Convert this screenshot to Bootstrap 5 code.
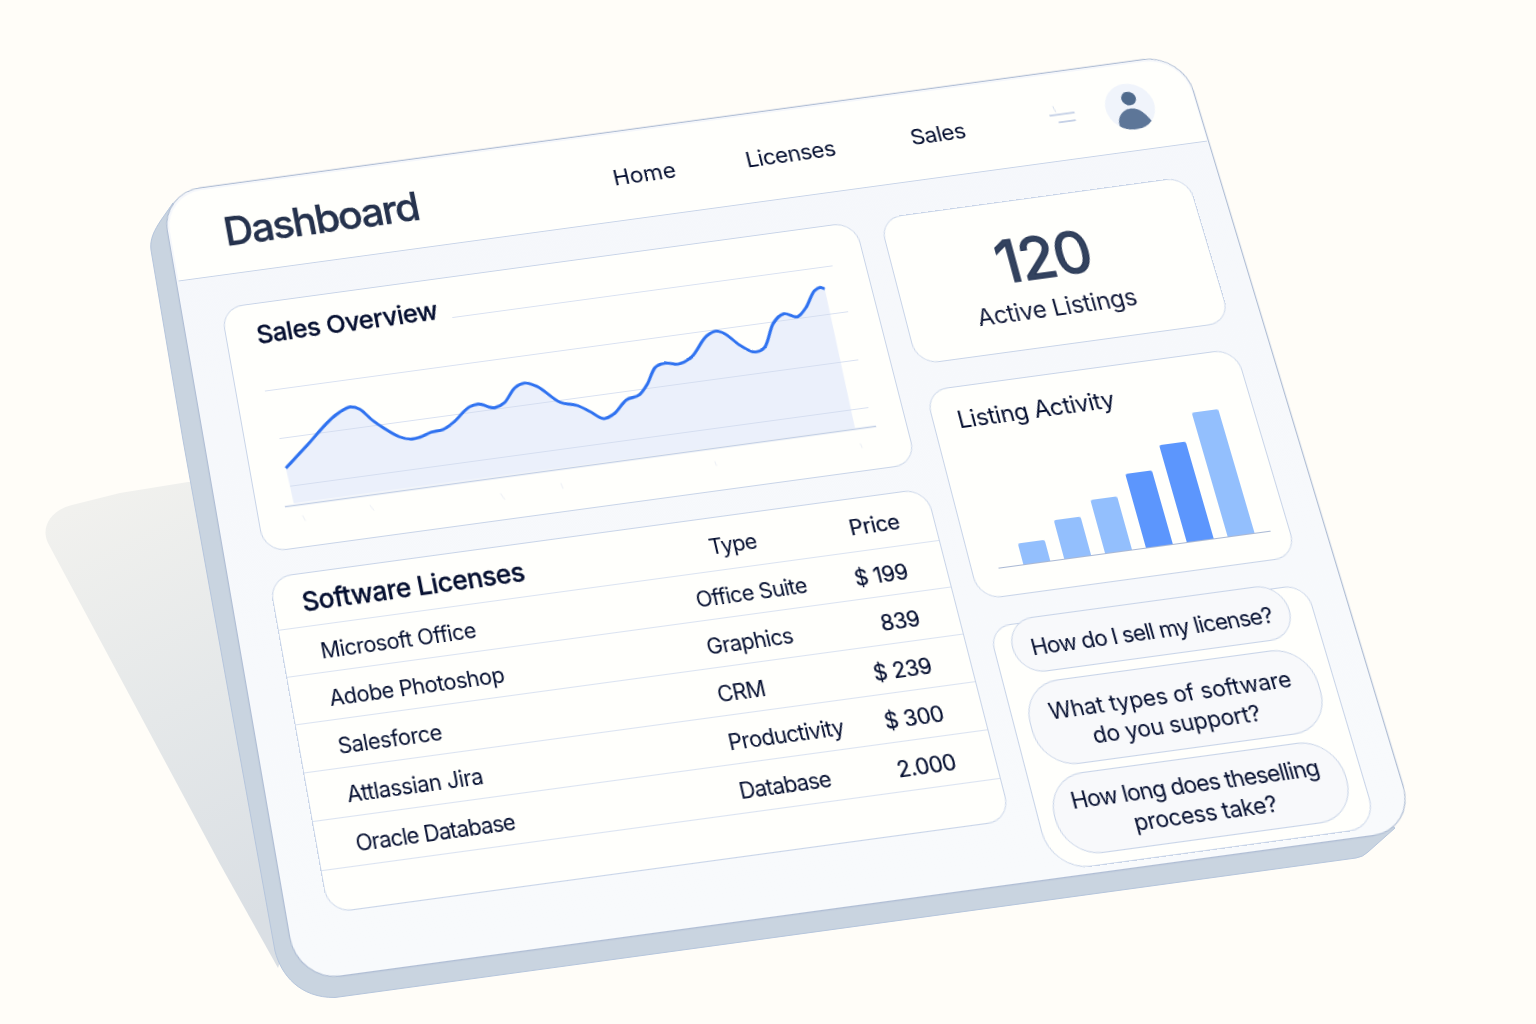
<!DOCTYPE html>
<html lang="en">
<head>
<meta charset="utf-8">
<meta name="viewport" content="width=device-width, initial-scale=1">
<title>Dashboard</title>
<link href="https://cdn.jsdelivr.net/npm/bootstrap@5.3.0/dist/css/bootstrap.min.css" rel="stylesheet">
<style>
  :root { --ink: #050f30; --line: #c8d4e8; --paper: #fffffc; }
  body { background: #fffdf8; font-family: Inter, "Open Sans", sans-serif; color: var(--ink); }
  .scene { width: 1536px; height: 1024px; background: #fffdf8; }
  .backdrop { width: 1536px; height: 1024px; }

  /* The tilted board: everything inside is laid out flat, then projected. */
  .board {
    width: 1083px; height: 801px; top: 0; left: 0;
    transform-origin: 0 0;
    transform: matrix3d(.9422, -.1282, 0, 0, .1380, .8767, 0, -.0001085, 0, 0, 1, 0, 161.5, 193.7, 0, 1);
    background: linear-gradient(180deg, #f5f7fb, #f8fafc);
    border-radius: 41px; padding: 1.5px;
    box-shadow: 0 0 0 1.2px #afbdd4, 0 0 0 5px rgba(255, 255, 255, .005);
  }
  .topbar { height: 95px; background: var(--paper); border-bottom: 1.6px solid var(--line); padding-left: 56px; border-radius: 40px 40px 0 0; }
  .brand { width: 411px; font-size: 42.5px; font-weight: 500; line-height: 1; color: #25324d; letter-spacing: -1.9px; padding-top: 6px; -webkit-text-stroke: .3px #14203c; }
  .topbar .nav-link { font-size: 23.5px; line-height: 1; padding: 3px 0 0; color: var(--ink); letter-spacing: -.55px; }
  .topbar .nl-home { width: 140px; letter-spacing: 0; } .nl-lic { width: 174px; } .nl-sales { width: 147px; }
  .burger { width: 58px; padding-bottom: 4px; }

  .panel { background: var(--paper); border: 1.6px solid var(--line); border-radius: 23px; }
  .area { padding: 34.5px 0 0 38.5px; gap: 22px; }
  .col-main { width: 667px; gap: 25.5px; }
  .col-side { width: 322px; }
  .sales { height: 257.5px; width: 664px; }
  .sec-title { font-size: 26.3px; font-weight: 500; line-height: 1; margin: 0; color: var(--ink); -webkit-text-stroke: .3px var(--ink); letter-spacing: -.45px; }
  .sales .sec-title { height: 51px; padding: 20px 0 0 31px; }
  .sales svg { margin-left: 2px; }

  .licenses { height: 329px; }
  .lic-row { height: 47px; border-bottom: 1.3px solid #dbe3f1; font-size: 21.5px; line-height: 1; letter-spacing: -.5px; padding: 6px 38px 0 37.5px; }
  .lic-head { height: 53px; padding: 5px 34px 0 28px; }
  .lic-head .c-name { width: 411px; padding-top: 0; }
  .c-name { width: 377px; }
  .c-type { flex: 1; letter-spacing: -.65px; }
  .c-price { -webkit-text-stroke: .2px var(--ink); letter-spacing: -.4px; }
  .c-tight { letter-spacing: -.85px; }

  .stat { height: 158px; width: 323px; padding-right: 14px; }
  .stat-num { font-size: 62px; font-weight: 400; line-height: 1; color: #33435f; letter-spacing: -1.7px; -webkit-text-stroke: 1.6px #2c3b58; margin-top: 32px; }
  .stat-cap { font-size: 24.5px; line-height: 1; margin-top: 11px; color: #151d3c; letter-spacing: -.3px; }
  .activity { height: 215px; width: 319px; margin: 26.5px 0 0 1px; padding: 22.5px 18px 0 26px; }
  .act-title { font-size: 24px; line-height: 1; letter-spacing: -.45px; margin-left: -2px; }
  .bars { height: 139.5px; gap: 14px; border-bottom: 1.5px solid #a9b8d4; padding-left: 24.5px; }
  .bar-item { width: 27px; border-radius: 2px 2px 0 0; background: #93bffd; }
  .bar-item.strong { background: #5c96fd; }

  .chat { height: 237px; width: 317px; margin: 27.5px 0 0 3px; border-radius: 22px 22px 28px 38px; padding-left: 15px; gap: 8.5px; }
  .bubble { width: 285px; border: 1.6px solid var(--line); background: #f8f9fb; border-radius: 37px; font-size: 22px; line-height: 28px; text-align: center; letter-spacing: -.2px; padding: 4px 4px 0 0; }
  .bubble-1 { width: 276px; height: 54px; margin: -5px 0 0 2px; border-radius: 27px; letter-spacing: -.9px; padding-right: 0; }
  .bubble-2 { height: 82px; } .bubble-3 { height: 76.5px; letter-spacing: -.85px; padding-top: 2px; }
  .bubble-2 .tail { letter-spacing: -.3px; padding-right: 3px; }
  .bubble-3 .tail { letter-spacing: -.45px; padding-left: 5px; }
</style>
<script src="https://cdn.jsdelivr.net/npm/bootstrap@5.3.0/dist/js/bootstrap.bundle.min.js"></script>
</head>
<body class="overflow-hidden">
<main class="scene position-relative overflow-hidden">
  <svg class="backdrop d-block" viewBox="0 0 1536 1024" aria-hidden="true">
    <defs>
      <linearGradient id="shade" gradientUnits="userSpaceOnUse" x1="90" y1="500" x2="290" y2="900">
        <stop offset="0" stop-color="#f1f1ee"/><stop offset=".5" stop-color="#e5e8e9"/><stop offset="1" stop-color="#dadfe4"/>
      </linearGradient>
    </defs>
    <path d="M200 481 L188 482 L120 493 L72 505 C52 510 40 526 48 543 L56 558 L220 864 L278 968 L300 900 Z" fill="url(#shade)"/>
    <path d="M173 203 C160 222 149 234 151 250 L183 440 L275 951 C281 975 300 998 335 997.500 L1356 858 Q1363 857 1368 852 L1395 828 L1300 760 L300 700 Z" fill="#c9d4e0" stroke="#b5c5dc" stroke-width="1"/>
  </svg>

  <section class="board position-absolute">
    <header class="topbar d-flex align-items-center">
      <div class="brand">Dashboard</div>
      <nav class="d-flex">
        <a class="nav-link nl-home" href="#">Home</a>
        <a class="nav-link nl-lic" href="#">Licenses</a>
        <a class="nav-link nl-sales" href="#">Sales</a>
      </nav>
      <div class="burger">
        <svg width="30" height="30" viewBox="0 0 30 30" fill="none" stroke="#c6d1e6" stroke-width="2"><path d="M0 14.5h26.5M7.5 23h18"/><path d="M6 4.5l1.5 7" stroke-width="1" opacity=".7"/></svg>
      </div>
      <svg width="53" height="53" viewBox="0 0 53 53">
        <defs><clipPath id="disc"><circle cx="26.5" cy="26.5" r="25.5"/></clipPath></defs>
        <circle cx="26.5" cy="26.5" r="25.5" fill="#f0f4fb"/>
        <g fill="#5d7698" clip-path="url(#disc)"><circle cx="27.5" cy="17.500" r="7.6" fill="#4f6a8c"/><path d="M10.500 47 C9.500 36 18 28.5 27 28.5 C36 29 40.500 37 44.5 45.5 C38 53 17 53.5 10.500 47Z"/></g>
      </svg>
    </header>

    <div class="area d-flex">
      <div class="col-main d-flex flex-column">
        <section class="panel sales">
          <h2 class="sec-title">Sales Overview</h2>
          <svg class="d-block overflow-visible" width="657" height="204" viewBox="40 182.500 657 204" fill="none">
            <path id="fill" fill="#ebf0fb"/>
            <g stroke="#cfdaee" stroke-width="1.2" opacity=".8">
              <path d="M271 174H667M67 224H671M73 275H669M75 325H667"/>
            </g>
            <path d="M66 345H670" stroke="#c2cfe5" stroke-width="1.6"/>
            <path d="M82 356l2 6M151 355l3 6M283 361l3 7M345 359l1 6M502 358l1 5M650 360l1 5" stroke="#eceff5"/>
            <path id="curve" stroke="#2f72f0" stroke-width="3.1"/>
          </svg>
        </section>

        <section class="panel licenses">
          <div class="lic-row lic-head d-flex align-items-center">
            <h2 class="sec-title c-name">Software Licenses</h2><span class="c-type">Type</span><span class="c-price">Price</span>
          </div>
          <div class="lic-row d-flex align-items-center"><span class="c-name">Microsoft Office</span><span class="c-type">Office Suite</span><span class="c-price">$ 199</span></div>
          <div class="lic-row d-flex align-items-center"><span class="c-name">Adobe Photoshop</span><span class="c-type">Graphics</span><span class="c-price">839</span></div>
          <div class="lic-row d-flex align-items-center"><span class="c-name">Salesforce</span><span class="c-type">CRM</span><span class="c-price">$ 239</span></div>
          <div class="lic-row d-flex align-items-center"><span class="c-name">Attlassian Jira</span><span class="c-type">Productivity</span><span class="c-price">$ 300</span></div>
          <div class="lic-row d-flex align-items-center"><span class="c-name c-tight">Oracle Database</span><span class="c-type c-tight">Database</span><span class="c-price">2.000</span></div>
        </section>
      </div>

      <div class="col-side d-flex flex-column">
        <section class="panel stat d-flex flex-column align-items-center">
          <div class="stat-num">120</div>
          <div class="stat-cap">Active Listings</div>
        </section>
        <section class="panel activity">
          <div class="act-title">Listing Activity</div>
          <div class="bars d-flex align-items-end">
            <div class="bar-item" style="height:21px"></div>
            <div class="bar-item" style="height:39px"></div>
            <div class="bar-item" style="height:54px"></div>
            <div class="bar-item strong" style="height:75px"></div>
            <div class="bar-item strong" style="height:99px"></div>
            <div class="bar-item" style="height:127px"></div>
          </div>
        </section>
        <section class="panel chat d-flex flex-column">
          <div class="bubble bubble-1 d-flex align-items-center justify-content-center">How do I sell my license?</div>
          <div class="bubble bubble-2 d-flex align-items-center justify-content-center"><span>What types of software<br><span class="tail">do you support?</span></span></div>
          <div class="bubble bubble-3 d-flex align-items-center justify-content-center"><span>How long does theselling<br><span class="tail">process take?</span></span></div>
        </section>
      </div>
    </div>
  </section>
</main>
<script>
  // Sales series, drawn as a smooth line with a filled area down to the axis.
  const pts = [[74,306.1],[98.5,286.5],[138,256.5],[150.6,252.4],[159.1,256],[170.1,269.5],[180.5,279.5],[193.9,290],[204.3,293.8],[214,293.1],[226.7,289.5],[238.7,288.4],[250,283],[270.2,268.9],[279.1,267.4],[294.9,273.4],[305.8,269.5],[319.3,255.7],[330.3,252.3],[341.4,257.1],[361.3,276.8],[378.8,283],[389.3,290.5],[400.9,299.5],[411.9,296.7],[428.5,283.6],[442.9,280],[452.5,270.8],[464,254.7],[475,251.4],[488,254.2],[503.1,248.9],[523,229.4],[533.5,225.5],[542,229.4],[553.9,243],[566.6,252.2],[578.8,248.9],[592.8,225.9],[605.9,217.1],[619.4,222],[629.5,214],[642.8,197.2],[649.3,194.9],[653.3,196.8]];
  // Tangents weighted by the neighbouring intervals, since samples are unevenly spaced.
  const n = pts.length, h = [], s = [], m = [];
  for (let i = 0; i < n - 1; i++) { h[i] = pts[i + 1][0] - pts[i][0]; s[i] = (pts[i + 1][1] - pts[i][1]) / h[i]; }
  m[0] = s[0]; m[n - 1] = s[n - 2];
  for (let i = 1; i < n - 1; i++) m[i] = (s[i - 1] * h[i] + s[i] * h[i - 1]) / (h[i - 1] + h[i]);
  let d = 'M' + pts[0];
  for (let i = 0; i < n - 1; i++) {
    const [x0, y0] = pts[i], [x1, y1] = pts[i + 1], t = h[i] / 3;
    d += 'C' + [x0 + t, y0 + m[i] * t, x1 - t, y1 - m[i + 1] * t, x1, y1].map(v => v.toFixed(1)).join(' ');
  }
  document.getElementById('curve').setAttribute('d', d);
  document.getElementById('fill').setAttribute('d', d + 'L648.7 344L75.5 343Z');
</script>
</body>
</html>
